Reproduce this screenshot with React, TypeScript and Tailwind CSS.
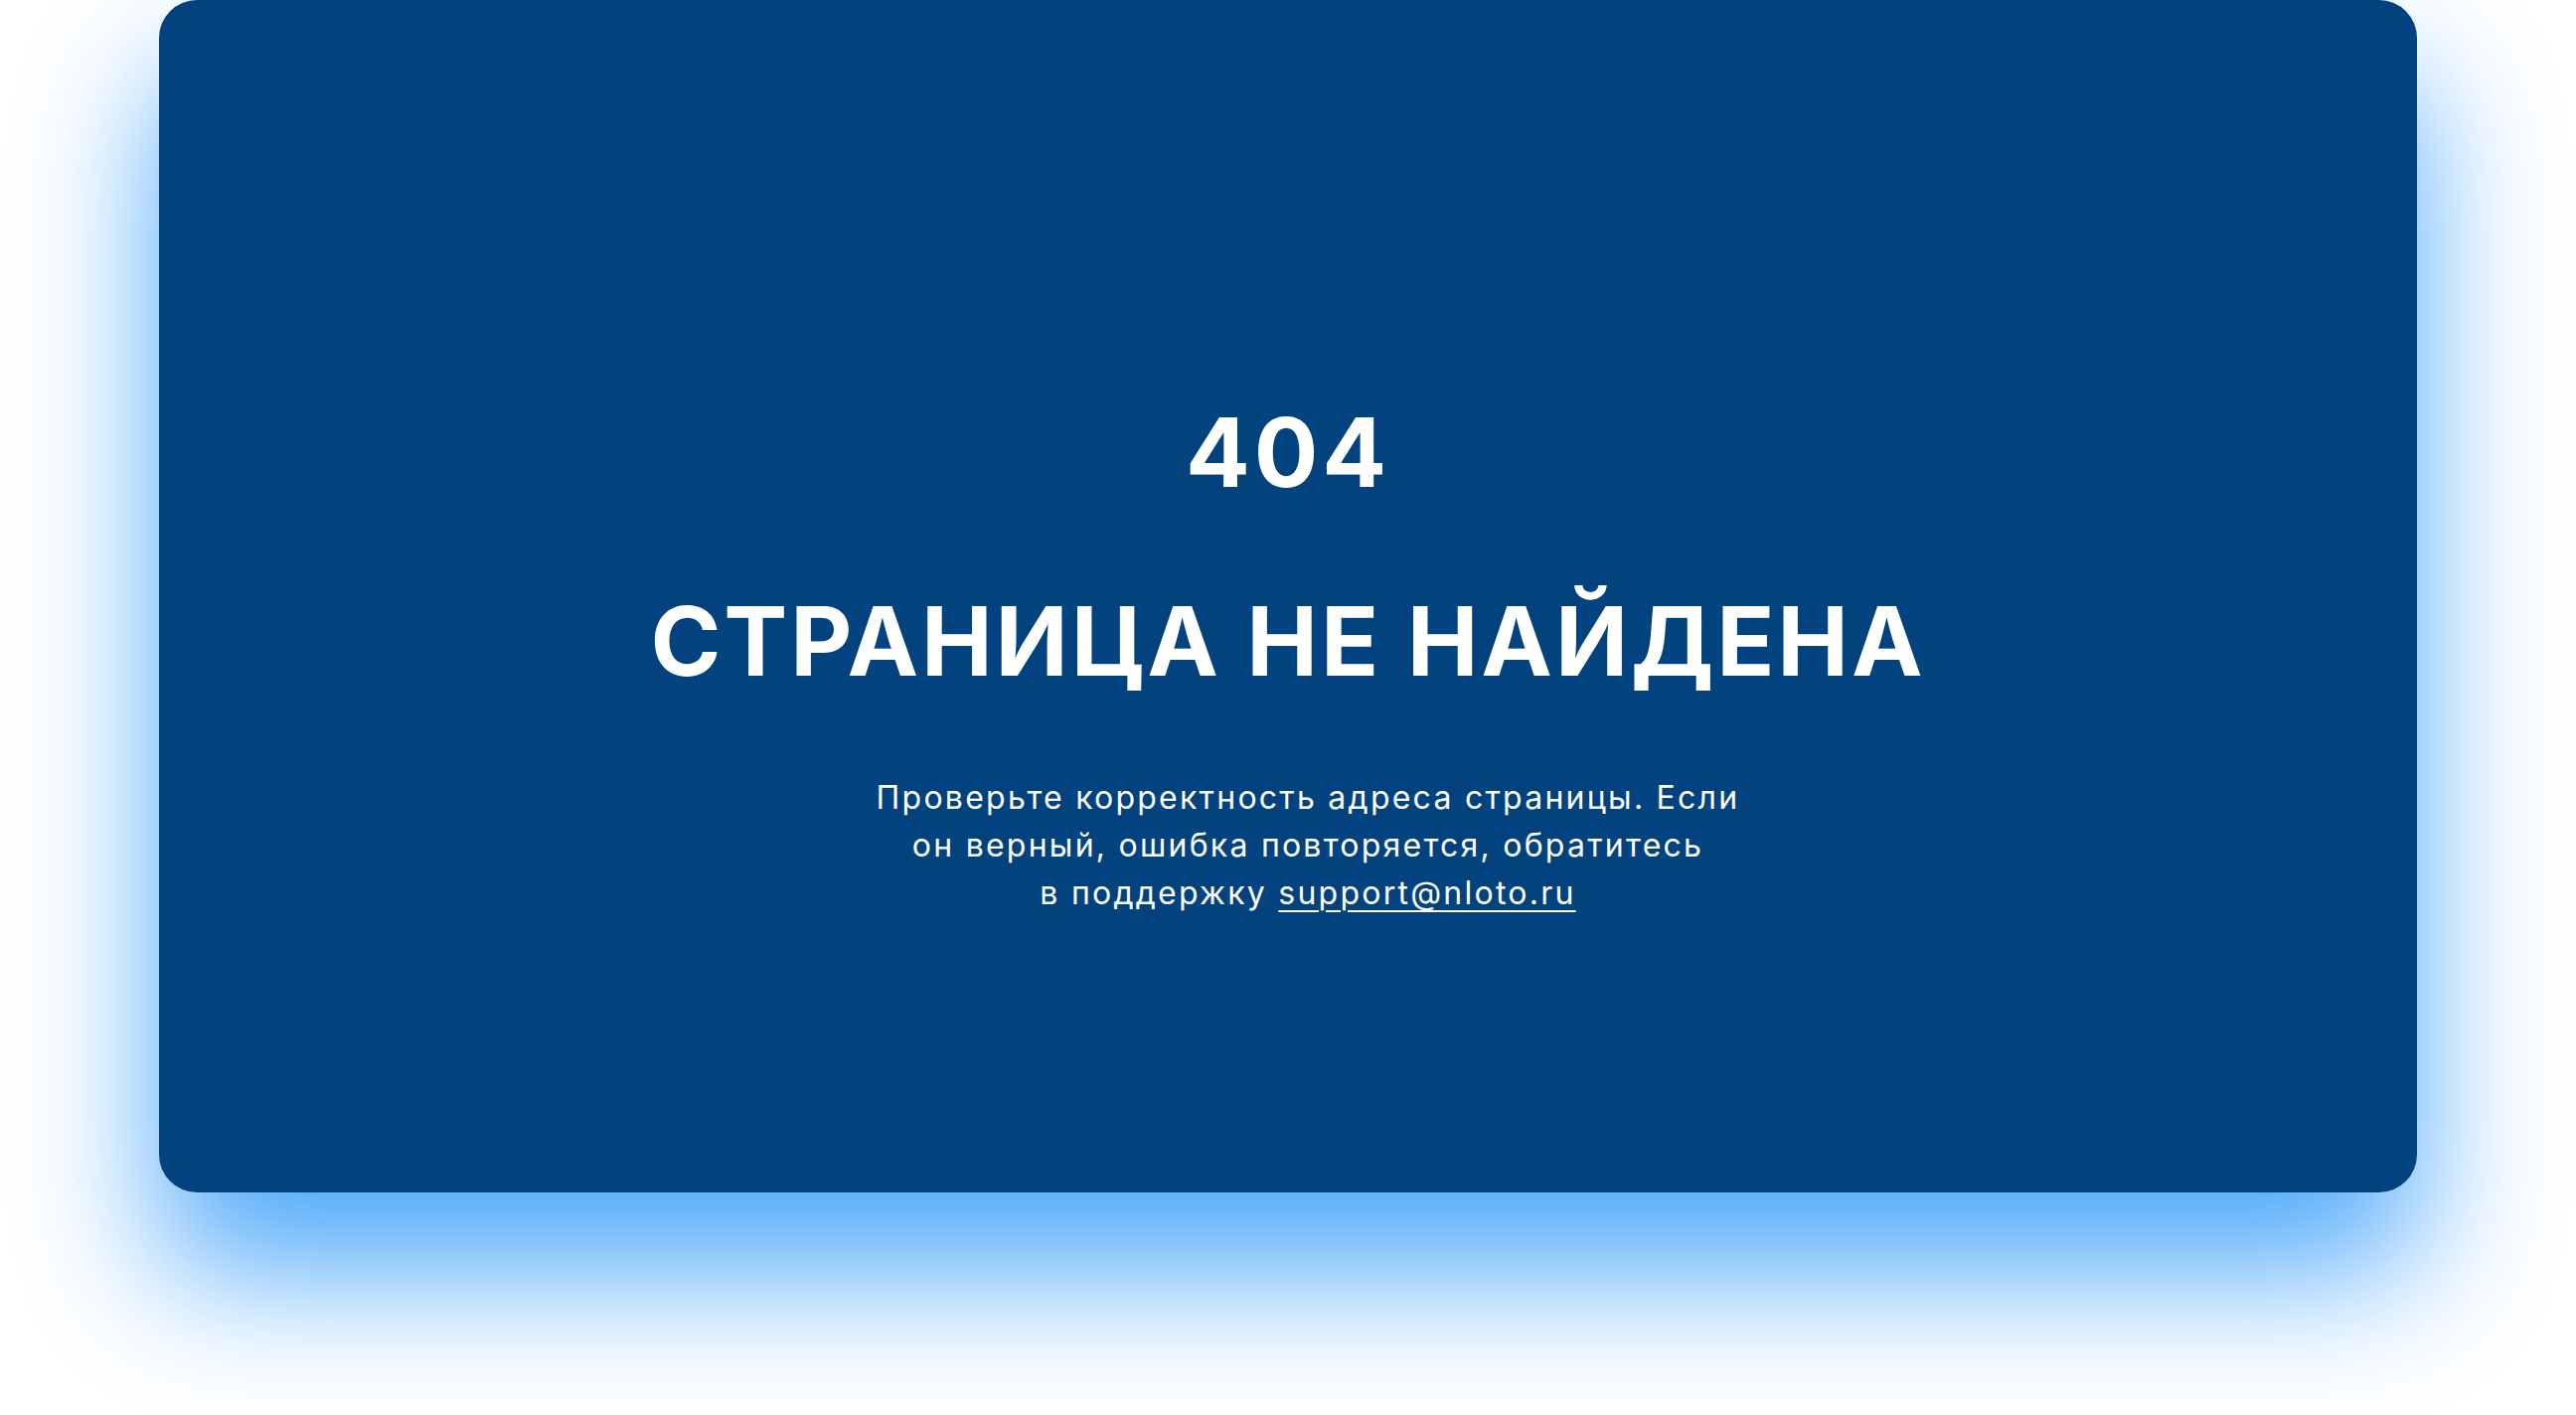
import React from "react";

const NotFound: React.FC = () => {
  return (
    <div className="w-full h-[1424px] bg-white px-[160px] overflow-hidden">
      <div className="h-[1200px] rounded-[38px] bg-[#01427f] shadow-[0_80px_140px_0_rgba(76,168,249,1)] flex flex-col items-center pt-[407px] text-white">
        <div className="font-['Inter',sans-serif] font-bold text-[96px] leading-none tracking-[0.04em]">
          404
        </div>
        <h1 className="mt-[94px] font-['Inter',sans-serif] font-bold text-[96px] leading-none tracking-[0.03em]">
          СТРАНИЦА НЕ НАЙДЕНА
        </h1>
        <p className="mt-[86px] ml-[40px] w-[1100px] text-center font-['Inter',sans-serif] text-[32px] leading-[48px] tracking-[0.07em]">
          Проверьте корректность адреса страницы. Если
          <br />
          он верный, ошибка повторяется, обратитесь
          <br />
          в поддержку{" "}
          <a href="mailto:support@nloto.ru" className="underline underline-offset-[6px] decoration-[2px]">
            support@nloto.ru
          </a>
        </p>
      </div>
    </div>
  );
};

export default function App() {
  return <NotFound />;
}
